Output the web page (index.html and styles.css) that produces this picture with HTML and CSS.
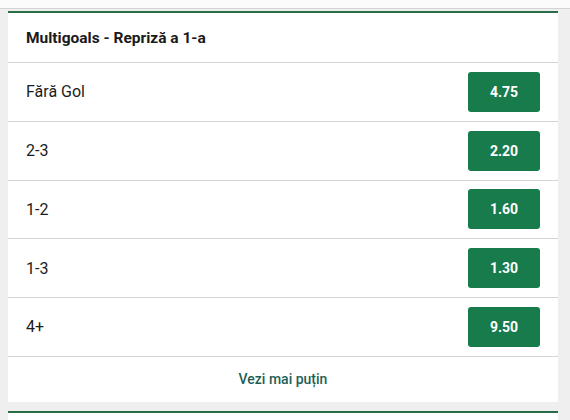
FILE: index.html
```html
<!DOCTYPE html>
<html lang="ro">
<head>
<meta charset="utf-8">
<link rel="stylesheet" href="styles.css">
</head>
<body>
<div class="topbar"></div>
<div class="page">
  <section class="card">
    <header class="card-head">Multigoals - Repriză a 1-a</header>
    <div class="row"><span class="label">Fără Gol</span><button class="odd">4.75</button></div>
    <div class="row"><span class="label">2-3</span><button class="odd">2.20</button></div>
    <div class="row"><span class="label">1-2</span><button class="odd">1.60</button></div>
    <div class="row"><span class="label">1-3</span><button class="odd">1.30</button></div>
    <div class="row"><span class="label">4+</span><button class="odd">9.50</button></div>
    <div class="card-foot">Vezi mai puțin</div>
  </section>
  <section class="card next"></section>
</div>
</body>
</html>
```
FILE: styles.css
```css
html, body {
  margin: 0;
  padding: 0;
}
body {
  background: #efefef;
  font-family: Roboto, "Liberation Sans", Arial, sans-serif;
  color: #1c1c1c;
  height: 420px;
  overflow: hidden;
}
.topbar {
  height: 8px;
  background: #fbfbfb;
  border-bottom: 1px solid #d3d3d3;
}
.page {
  padding: 2px 12px 0 8px;
  display: flex;
  flex-direction: column;
  gap: 9px;
}
.card {
  background: #fff;
  border-top: 2px solid #2a6c48;
}
.card-head {
  height: 50px;
  box-sizing: border-box;
  padding: 0 18px;
  display: flex;
  align-items: center;
  font-size: 15.5px;
  font-weight: 700;
  color: #1a1a1a;
  border-bottom: 1px solid #d6d6d6;
}
.row {
  height: 58.75px;
  box-sizing: border-box;
  padding: 0 18px;
  display: flex;
  align-items: center;
  justify-content: space-between;
  border-bottom: 1px solid #d6d6d6;
}
.label {
  font-size: 16px;
}
.odd {
  width: 72px;
  height: 40px;
  border: 0;
  border-radius: 3px;
  background: #177b4b;
  color: #fff;
  font-family: inherit;
  font-size: 14px;
  font-weight: 700;
  padding: 0;
}
.card-foot {
  height: 45px;
  display: flex;
  align-items: center;
  justify-content: center;
  font-size: 14px;
  font-weight: 500;
  color: #1d5f55;
}
.next {
  height: 20px;
}
```
